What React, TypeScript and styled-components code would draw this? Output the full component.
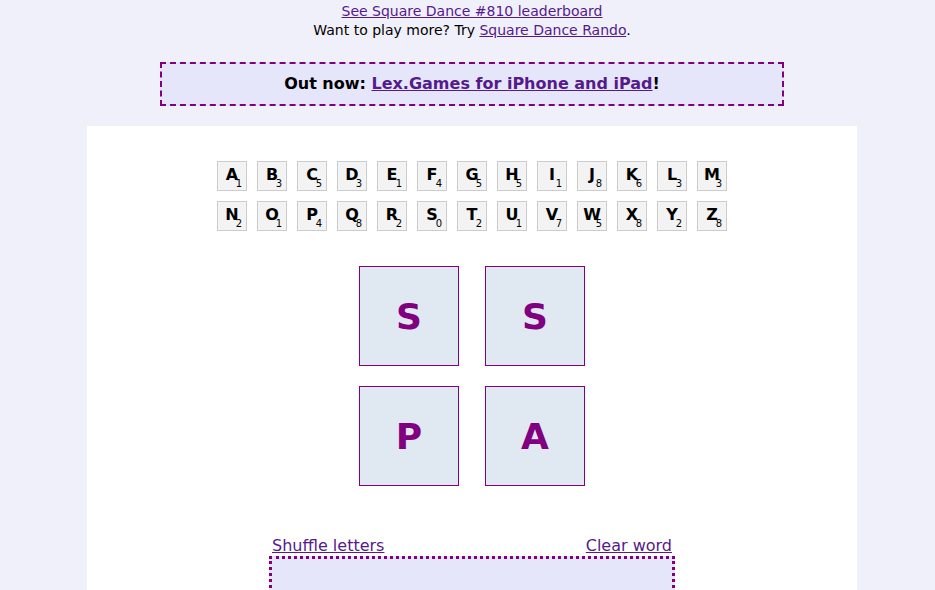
import styled, { createGlobalStyle } from 'styled-components'

const letters: [string, number][] = [
    ['A', 1], ['B', 3], ['C', 5], ['D', 3], ['E', 1], ['F', 4], ['G', 5],
    ['H', 5], ['I', 1], ['J', 8], ['K', 6], ['L', 3], ['M', 3],
    ['N', 2], ['O', 1], ['P', 4], ['Q', 8], ['R', 2], ['S', 0], ['T', 2],
    ['U', 1], ['V', 7], ['W', 5], ['X', 8], ['Y', 2], ['Z', 8],
]

const board = ['S', 'S', 'P', 'A']

function App() {
    const rows = [letters.slice(0, 13), letters.slice(13)]

    return (
        <>
            <GlobalStyle />
            <Page>
                <Header>
                    <div><Link href="#">See Square Dance #810 leaderboard</Link></div>
                    <div>Want to play more? Try <Link href="#">Square Dance Rando</Link>.</div>
                </Header>

                <Banner>
                    Out now: <Link href="#">Lex.Games for iPhone and iPad</Link>!
                </Banner>

                <Panel>
                    <LetterBank>
                        {rows.map((row, i) => (
                            <LetterRow key={i}>
                                {row.map(([letter, score]) => (
                                    <SmallTile key={letter}>
                                        {letter}
                                        <Score>{score}</Score>
                                    </SmallTile>
                                ))}
                            </LetterRow>
                        ))}
                    </LetterBank>

                    <Board>
                        {board.map((letter, i) => (
                            <BigTile key={i}>{letter}</BigTile>
                        ))}
                    </Board>

                    <Controls>
                        <Actions>
                            <Link href="#">Shuffle letters</Link>
                            <Link href="#">Clear word</Link>
                        </Actions>
                        <WordBox />
                    </Controls>
                </Panel>
            </Page>
        </>
    )
}

const GlobalStyle = createGlobalStyle`
    html {
        overflow: hidden;
    }

    body {
        margin: 0;
        background-color: #f0f0fa;
        color: #000;
        font-family: "DejaVu Sans", "Noto Sans", sans-serif;
    }
`

const Page = styled.div`
    padding-left: 9px;
    display: flex;
    flex-direction: column;
    align-items: center;
`

const Link = styled.a`
    color: #551a8b;
    text-decoration: underline;
`

// Header

const Header = styled.header`
    padding-top: 2px;
    font-size: 14px;
    line-height: 19px;
    text-align: center;
`

const Banner = styled.div`
    margin-top: 22px;
    width: 620px;
    height: 40px;

    border: 2px dashed #800080;
    background-color: #e6e6fa;

    font-size: 16px;
    font-weight: bold;
    line-height: 40px;
    text-align: center;
`

// Game panel

const Panel = styled.main`
    margin-top: 20px;
    width: 770px;
    padding: 35px 0 40px;

    display: flex;
    flex-direction: column;
    align-items: center;

    background-color: #fff;
`

const LetterBank = styled.div`
    display: flex;
    flex-direction: column;
    gap: 10px;
`

const LetterRow = styled.div`
    display: flex;
    gap: 10px;
`

const SmallTile = styled.div`
    position: relative;
    width: 28px;
    height: 28px;

    border: 1px solid #ccc;
    background-color: #f3f3f3;

    font-size: 16px;
    font-weight: bold;
    line-height: 25px;
    text-align: center;
`

const Score = styled.span`
    position: absolute;
    right: 4px;
    bottom: 1px;

    font-size: 10px;
    font-weight: normal;
    line-height: 10px;
`

const Board = styled.div`
    margin-top: 35px;
    display: grid;
    grid-template-columns: 100px 100px;
    column-gap: 26px;
    row-gap: 20px;
`

const BigTile = styled.div`
    width: 98px;
    height: 98px;

    display: flex;
    align-items: center;
    justify-content: center;

    border: 1px solid #800080;
    background-color: #e0e8f1;

    color: #800080;
    font-size: 36px;
    font-weight: bold;
`

// Word entry

const Controls = styled.div`
    margin-top: 50px;
    width: 400px;
    display: flex;
    flex-direction: column;
    align-items: center;
`

const Actions = styled.div`
    width: 100%;
    display: flex;
    justify-content: space-between;
    font-size: 16px;
    line-height: 20px;
`

const WordBox = styled.div`
    width: 400px;
    height: 44px;
    flex-shrink: 0;

    border: 3px dotted #800080;
    background-color: #e6e6fa;
`

export default App
